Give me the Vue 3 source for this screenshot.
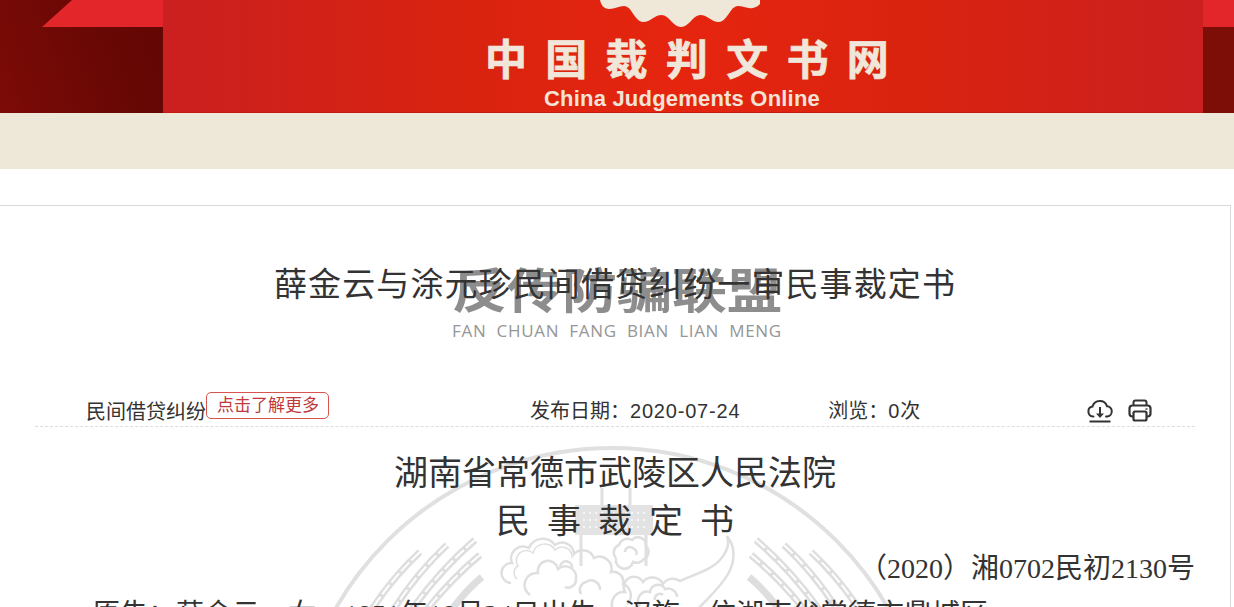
<script setup>
const bands = [
  { d: 'M420 552Q392 578 370 612', dashed: true },
  { d: 'M447 545Q416 574 392 612', dashed: true },
  { d: 'M475 540Q440 570 410 612', dashed: true },
  { d: 'M480 555Q450 580 425 612', dashed: true },
  { d: 'M482 577Q466 590 450 612', dashed: false }
]
</script>

<template>
  <div class="page">
    <header class="banner">
      <div class="side side-left">
        <div class="strip"><div class="flag"></div></div>
      </div>
      <div class="centre">
        <svg class="seal" viewBox="600 0 160 28" width="160" height="28" aria-hidden="true">
          <path d="M600 0C601 5 604 9 609 9C615 9 619 6 624 6C632 6 634 21 643 22C651 22 654 15 662 15C670 16 673 27 681 27C689 27 692 16 700 15C708 15 711 22 719 22C728 21 730 6 738 6C743 6 747 9 753 8C758 7 761 4 762 0Z" />
        </svg>
        <div class="logo">中国裁判文书网</div>
        <div class="logo-en">China Judgements Online</div>
      </div>
      <div class="side side-right">
        <div class="strip-right"></div>
      </div>
    </header>
    <div class="band"></div>

    <main class="box">
      <svg class="emblem" viewBox="265 440 700 200" width="700" height="200" aria-hidden="true">
        <circle cx="612" cy="766" r="318" class="ring" />
        <g v-for="side in ['', 'translate(1231 0) scale(-1 1)']" :key="side" :transform="side">
          <g v-for="b in bands" :key="b.d">
            <path :d="b.d" class="band-line" />
            <path v-if="b.dashed" :d="b.d" class="band-dash" />
          </g>
        </g>
        <path d="M602 505V488M630 505V488M581 535V566M646 535V566" class="thin" />
        <rect x="575" y="505" width="78" height="30" class="gate" />
        <path d="M583 513H645M583 520H645M583 527H645" class="gate-dots" />
        <path d="M511 583a10 10 0 0 1 1-20a12 12 0 0 1 17-15a15 15 0 0 1 26-3a12 12 0 0 1 19 9a12 12 0 0 1 20 4a12 12 0 0 1 17 14a10 10 0 0 1 12 12a12 12 0 0 1 4 20" class="cloud" />
        <path d="M517 579a8 8 0 0 1 1-13a10 10 0 0 1 15-13a12 12 0 0 1 22-3a10 10 0 0 1 17 8" class="cloud thin-cloud" />
        <path d="M530 595a12 12 0 0 1 8-22a10 10 0 0 1 20-4a11 11 0 0 1 18 10a8 8 0 0 1-11 8M560 566a6 6 0 0 1 12 3M600 590a9 9 0 0 0-14-8a8 8 0 0 0-5 12" class="cloud" />
        <path d="M616 558a8 8 0 0 1 3-13a9 9 0 0 1 13-5a8 8 0 0 1 14 6a8 8 0 0 1-2 13a9 9 0 0 1-11 3a8 8 0 0 1-17-4M625 552a5 5 0 0 1 9-3a4 4 0 0 1 2 6" class="cloud" />
        <path d="M615 612a12 12 0 0 1 10-20a10 10 0 0 1 18-10a12 12 0 0 1 20 2a12 12 0 0 1 17-3C696 574 712 569 720 560C727 552 730 544 727 536C735 546 736 560 728 574C720 588 708 598 695 612" class="cloud" />
        <path d="M640 606a9 9 0 0 1 10-14a8 8 0 0 1 15-3a9 9 0 0 1 12 8M655 600a5 5 0 0 1 8-5" class="cloud" />
      </svg>

      <div class="watermark" aria-hidden="true">
        <div class="wm-cn">反传防骗联盟</div>
        <div class="wm-en">FAN CHUAN FANG BIAN LIAN MENG</div>
      </div>

      <h1 class="title">薛金云与涂元珍民间借贷纠纷一审民事裁定书</h1>

      <div class="meta">
        <span class="category">民间借贷纠纷</span>
        <a class="more">点击了解更多</a>
        <span class="date"><span>发布日期：</span><span class="num">2020-07-24</span></span>
        <span class="views"><span>浏览：</span><span class="num">0</span><span>次</span></span>
        <span class="tools">
          <svg viewBox="0 0 26 24" width="26" height="24" aria-hidden="true" class="tool">
            <path d="M6.5 17.5H6A5 5 0 0 1 5.5 7.6A7.6 7.6 0 0 1 20 7.2A5.2 5.2 0 0 1 20.5 17.5H19" fill="none" stroke="#333" stroke-width="2" stroke-linecap="round" />
            <path d="M13 8V17" stroke="#333" stroke-width="2" fill="none" />
            <path d="M9 14.5H17L13 19Z" fill="#333" />
            <path d="M2.5 22.5H23.5" stroke="#333" stroke-width="2" fill="none" />
          </svg>
          <svg viewBox="0 0 24 24" width="24" height="24" aria-hidden="true" class="tool">
            <path d="M5.5 7V3.5Q5.5 1.500 7.500 1.500H16.500Q18.500 1.500 18.500 3.500V7" fill="none" stroke="#333" stroke-width="2" />
            <rect x="1.500" y="6.500" width="21" height="11" rx="3" fill="none" stroke="#333" stroke-width="2.200" />
            <rect x="5.500" y="12.500" width="13" height="9" rx="1.500" fill="#fff" stroke="#333" stroke-width="2.200" />
            <rect x="17.500" y="9" width="2" height="2" fill="#777" />
          </svg>
        </span>
      </div>

      <div class="doc">
        <div class="court">湖南省常德市武陵区人民法院</div>
        <div class="kind">民事裁定书</div>
        <div class="case-no">（2020）湘0702民初2130号</div>
        <p class="para">原告：薛金云，女，1951年10月24日出生，汉族，住湖南省常德市鼎城区。</p>
      </div>
    </main>
  </div>
</template>

<style scoped>
.page {
  width: 1234px;
  height: 607px;
  overflow: hidden;
  background: #fff;
  color: #333;
  font-family: "Noto Sans CJK SC", "Liberation Sans", sans-serif;
}
.banner {
  display: flex;
  height: 113px;
}
.side-left {
  width: 163px;
  flex: none;
  background: linear-gradient(70deg, #7d0b06 0%, #690805 60%, #620604 100%);
}
.strip {
  height: 27px;
}
.flag {
  height: 100%;
  background: #e3262a;
  clip-path: polygon(42px 100%, 72px 0, 100% 0, 100% 100%);
}
.centre {
  width: 1040px;
  flex: none;
  display: flex;
  flex-direction: column;
  align-items: center;
  overflow: hidden;
  background: linear-gradient(90deg, #cb2020 0%, #d9230f 30%, #e6250f 50%, #d9230f 72%, #cb2020 100%);
  border-bottom: 1px solid #c41a10;
  box-sizing: border-box;
}
.seal {
  flex: none;
  margin-left: -6px;
  fill: #efe8d9;
}
.logo {
  margin: 1px 0 0 26px;
  font-size: 42px;
  line-height: 56px;
  height: 50px;
  font-weight: 700;
  letter-spacing: 18.3px;
  white-space: nowrap;
  color: #f0e6da;
  -webkit-text-stroke: 0.7px #f0e6da;
}
.logo-en {
  margin: 7px 0 0 -2px;
  font-family: "Liberation Sans", sans-serif;
  font-size: 22px;
  line-height: 26px;
  font-weight: 700;
  letter-spacing: 0.2px;
  color: #f3e3d6;
  white-space: nowrap;
}
.side-right {
  flex: 1;
  background: #7d0e07;
}
.strip-right {
  height: 27px;
  background: #e3262a;
}
.band {
  height: 56px;
  background: #eee8d9;
}
.box {
  position: relative;
  box-sizing: border-box;
  width: 1232px;
  height: 500px;
  margin: 36px 0 0 -1px;
  padding: 0 36px;
  border: 1px solid #d9d9d9;
  overflow: hidden;
}
.emblem {
  position: absolute;
  left: 265px;
  top: 234px;
}
.ring {
  fill: none;
  stroke: #e0e0e0;
  stroke-width: 4;
}
.band-line {
  fill: none;
  stroke: #dedede;
  stroke-width: 7;
}
.band-dash {
  fill: none;
  stroke: #fff;
  stroke-width: 2;
  stroke-dasharray: 12 3;
}
.thin {
  fill: none;
  stroke: #e0e0e0;
  stroke-width: 3;
}
.gate {
  fill: #e3e3e3;
}
.gate-dots {
  fill: none;
  stroke: #f6f6f6;
  stroke-width: 2;
  stroke-dasharray: 2 4;
}
.cloud {
  fill: none;
  stroke: #dfdfdf;
  stroke-width: 2.500;
}
.thin-cloud {
  stroke-width: 1.500;
}
.watermark {
  position: absolute;
  left: 452px;
  top: 52px;
  width: 340px;
  color: #8d8d8d;
}
.wm-cn {
  font-size: 55px;
  line-height: 66px;
  font-weight: 700;
  white-space: nowrap;
  transform: scaleY(0.86);
  transform-origin: 50% 10px;
}
.wm-en {
  margin-top: -5px;
  font-family: "Open Sans", sans-serif;
  font-size: 17px;
  line-height: 24px;
  white-space: nowrap;
  word-spacing: 5px;
  letter-spacing: 0.7px;
  color: #969696;
}
.title {
  position: relative;
  margin: 0;
  padding-top: 53px;
  font-size: 33px;
  line-height: 46px;
  font-weight: 400;
  text-align: center;
  letter-spacing: 1.1px;
  color: #333;
}
.meta {
  position: relative;
  display: flex;
  align-items: center;
  height: 40px;
  margin: 82px -1px 0;
  padding: 8px 43px 0 51px;
  box-sizing: border-box;
  border-bottom: 1px dashed #ddd;
  font-size: 20px;
  line-height: 30px;
  white-space: nowrap;
}
.more {
  box-sizing: border-box;
  height: 27px;
  margin-top: -11px;
  padding: 0 10px 0 10px;
  width: 123px;
  border: 1px solid #d9534f;
  border-radius: 5px;
  color: #c0393b;
  font-size: 17px;
  line-height: 22px;
}
.date {
  margin-left: 201px;
}
.views {
  margin-left: 88px;
}
.num {
  font-family: "Liberation Sans", sans-serif;
  letter-spacing: 0.8px;
}
.tools {
  display: flex;
  gap: 15px;
  margin-left: auto;
}
.doc {
  position: relative;
  font-size: 34px;
  line-height: 48px;
  padding-top: 20px;
  text-align: center;
}
.kind {
  letter-spacing: 17px;
  padding-left: 17px;
}
.case-no {
  margin: 2px -1px -2px 0;
  text-align: right;
  font-family: "Liberation Serif", "Noto Sans CJK SC", serif;
  font-size: 28px;
}
.para {
  margin: 0;
  text-align: left;
  text-indent: 56px;
  font-family: "Liberation Serif", "Noto Sans CJK SC", serif;
  font-size: 28px;
  white-space: nowrap;
}
</style>

<style>
html, body {
  margin: 0;
  overflow: hidden;
  background: #fff;
}
</style>
